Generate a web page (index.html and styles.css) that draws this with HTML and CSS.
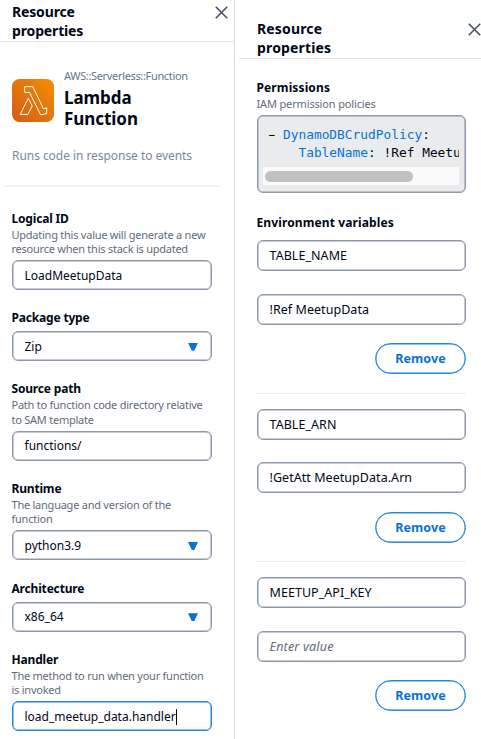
FILE: index.html
```html
<!DOCTYPE html>
<html lang="en">
<head>
<meta charset="utf-8">
<title>Resource properties</title>
<link rel="stylesheet" href="styles.css">
</head>
<body>
<main class="workspace">
  <section class="panel panel-left">
    <header class="panel-header">
      <h2 class="panel-title">Resource<br>properties</h2>
      <svg class="close" viewBox="0 0 12 12"><path d="M.7 .7l10.6 10.6M11.3 .7L.7 11.3"/></svg>
    </header>
    <div class="summary">
      <div class="resource">
        <svg class="resource-icon" viewBox="0 0 42 43">
          <defs><linearGradient id="orange" x1="0" y1="1" x2="1" y2="0"><stop offset="0" stop-color="#d45b14"/><stop offset="1" stop-color="#f68d05"/></linearGradient></defs>
          <rect width="42" height="43" rx="7.5" fill="url(#orange)"/>
          <path class="lambda" d="M12.7 7.6H20.8L31.3 29.6L34.7 28.9V34.6L28.6 35.8L17.5 13.4H12.7ZM16.3 19.2L20.2 27L15.8 35.4H8.2Z"/>
        </svg>
        <div>
          <div class="resource-type">AWS::Serverless::Function</div>
          <h1 class="resource-name">Lambda<br>Function</h1>
        </div>
      </div>
      <p class="resource-about">Runs code in response to events</p>
    </div>
    <div class="form">
      <div class="field"><div class="label">Logical ID</div><div class="hint">Updating this value will generate a new<br>resource when this stack is updated</div><div class="input">LoadMeetupData</div></div>
      <div class="field"><div class="label">Package type</div><div class="input select">Zip<i class="caret"></i></div></div>
      <div class="field"><div class="label">Source path</div><div class="hint">Path to function code directory relative<br>to SAM template</div><div class="input">functions/</div></div>
      <div class="field"><div class="label">Runtime</div><div class="hint">The language and version of the<br>function</div><div class="input select">python3.9<i class="caret"></i></div></div>
      <div class="field"><div class="label">Architecture</div><div class="input select">x86_64<i class="caret"></i></div></div>
      <div class="field"><div class="label">Handler</div><div class="hint">The method to run when your function<br>is invoked</div><div class="input focused">load_meetup_data.handler<i class="cursor"></i></div></div>
    </div>
  </section>
  <section class="panel panel-right">
    <header class="panel-header">
      <h2 class="panel-title">Resource<br>properties</h2>
      <svg class="close" viewBox="0 0 12 12"><path d="M.7 .7l10.6 10.6M11.3 .7L.7 11.3"/></svg>
    </header>
    <div class="details">
      <div class="label">Permissions</div>
      <div class="hint">IAM permission policies</div>
      <div class="code-box">
        <div class="code">
          <div><span class="dash">-</span> <span class="key">DynamoDBCrudPolicy</span>:</div>
          <div class="nested"><span class="key">TableName</span>: !Ref Meetu</div>
        </div>
        <div class="scroll-track"><div class="scroll-thumb"></div></div>
      </div>
      <div class="label env-label">Environment variables</div>
      <div class="variable"><div class="input">TABLE_NAME</div><div class="input">!Ref MeetupData</div><div class="remove">Remove</div></div>
      <div class="variable"><div class="input">TABLE_ARN</div><div class="input">!GetAtt MeetupData.Arn</div><div class="remove">Remove</div></div>
      <div class="variable"><div class="input">MEETUP_API_KEY</div><div class="input placeholder">Enter value</div><div class="remove">Remove</div></div>
    </div>
  </section>
</main>
</body>
</html>
```
FILE: styles.css
```css
* { box-sizing: border-box; }
body { margin: 0; background: #fff; color: #000716; font-family: "Noto Sans", sans-serif; }
h1, h2, p { margin: 0; }
.workspace { display: flex; width: 481px; height: 739px; overflow: hidden; }
.panel-left { width: 235px; height: 739px; border-right: 1px solid #dcdee1; }
.panel-right { width: 246px; padding: 17px 0 0 4px; }
.panel-header { display: flex; justify-content: space-between; border-bottom: 1px solid #e3e5e8; }
.panel-left .panel-header { height: 41.5px; padding: 3px 6px 0 12px; }
.panel-right .panel-header { height: 42px; padding: 3px 0 0 18px; }
.panel-title { font-size: 14px; line-height: 18.5px; font-weight: 700; letter-spacing: -0.15px; }
.panel-right .panel-title { letter-spacing: 0.15px; }
.close { width: 13px; height: 13px; margin-top: 3px; fill: none; stroke: #414d5c; stroke-width: 1.4; }
.summary { height: 145px; margin: 0 15px 0 5px; padding: 26.5px 0 0 7px; border-bottom: 2px solid #f4f4f5; }
.resource { display: flex; gap: 10px; }
.resource-icon { width: 42px; height: 43px; margin-top: 11px; }
.lambda { fill: none; stroke: #fff; stroke-width: 1; stroke-linejoin: round; }
.resource-type { font-size: 11px; line-height: 16px; color: #687789; white-space: nowrap; letter-spacing: -0.34px; }
.resource-name { font-size: 17px; line-height: 21.3px; font-weight: 700; letter-spacing: -0.05px; margin-top: 3px; }
.resource-about { margin-top: 17px; font-size: 12px; line-height: 18px; color: #7d8998; white-space: nowrap; letter-spacing: -0.05px; }
.form { display: flex; flex-direction: column; gap: 19.2px; padding: 23.2px 0 0 11.5px; width: 212px; }
.label { font-size: 12px; line-height: 18px; font-weight: 700; letter-spacing: -0.18px; }
.details .label { letter-spacing: 0.12px; }
.hint { font-size: 11px; line-height: 14.2px; color: #5f6b7a; white-space: nowrap; letter-spacing: -0.24px; margin-bottom: 4px; }
.details .hint { letter-spacing: -0.15px; }
.label + .input { margin-top: 4px; }
.input { display: flex; align-items: center; height: 30px; padding: 1px 12px 0; border: 1px solid #8d99a8; box-shadow: inset 0 0 0 0.5px #8d99a8; border-radius: 6px; font-size: 12px; line-height: 18px; white-space: nowrap; }
.select { justify-content: space-between; }
.caret { width: 10px; height: 8px; margin-right: 1px; background: #0972d3; clip-path: polygon(0 0, 100% 0, 62% 100%, 38% 100%); }
.focused { border-color: #2583dc; box-shadow: inset 0 0 0 0.5px #2583dc; }
.cursor { width: 1px; height: 16px; background: #000716; }
.details { width: 227px; padding: 20px 0 0 17.5px; }
.code-box { height: 78px; padding: 10px 6.5px 0 5px; border: 1px solid #8d99a8; box-shadow: inset 0 0 0 0.5px #8d99a8; border-radius: 6px; background: #e9ebed; }
.code { overflow: hidden; padding-left: 5px; font-family: "DejaVu Sans Mono", monospace; font-size: 12.85px; line-height: 18px; white-space: nowrap; }
.nested { padding-left: 4ch; }
.dash { display: inline-block; transform: scaleX(1.7); }
.key { color: #0972d3; }
.scroll-track { height: 18px; margin-top: 5px; padding: 4px 2px; background: #fafafa; }
.scroll-thumb { width: 148px; height: 11px; border-radius: 6px; background: #c1c1c1; }
.env-label { margin-top: 20.5px; }
.variable { display: flex; flex-direction: column; height: 153.5px; border-bottom: 1px solid #e9ebed; margin-bottom: 15px; }
.env-label + .variable { margin-top: 8.5px; }
.variable:last-child { border-bottom: 0; }
.variable .input { height: 31px; flex: none; font-size: 12.5px; letter-spacing: 0.05px; }
.variable .input + .input { margin-top: 22.5px; }
.variable .placeholder { color: #5f6b7a; font-style: italic; letter-spacing: 0.2px; }
.remove { display: flex; align-items: center; justify-content: center; align-self: flex-end; width: 91px; height: 31px; margin-top: 18.5px; border: 1px solid #2583dc; box-shadow: inset 0 0 0 0.5px #2583dc; border-radius: 16px; color: #0972d3; font-size: 12.5px; font-weight: 700; letter-spacing: 0.05px; }
```
